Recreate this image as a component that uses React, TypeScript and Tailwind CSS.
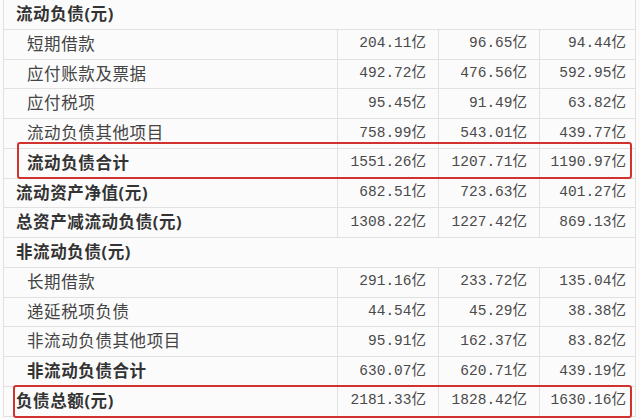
type Row = {
  label: string;
  kind: "section" | "item" | "total" | "summary";
  values?: string[];
};

const rows: Row[] = [
  { label: "流动负债(元)", kind: "section" },
  { label: "短期借款", kind: "item", values: ["204.11亿", "96.65亿", "94.44亿"] },
  { label: "应付账款及票据", kind: "item", values: ["492.72亿", "476.56亿", "592.95亿"] },
  { label: "应付税项", kind: "item", values: ["95.45亿", "91.49亿", "63.82亿"] },
  { label: "流动负债其他项目", kind: "item", values: ["758.99亿", "543.01亿", "439.77亿"] },
  { label: "流动负债合计", kind: "total", values: ["1551.26亿", "1207.71亿", "1190.97亿"] },
  { label: "流动资产净值(元)", kind: "summary", values: ["682.51亿", "723.63亿", "401.27亿"] },
  { label: "总资产减流动负债(元)", kind: "summary", values: ["1308.22亿", "1227.42亿", "869.13亿"] },
  { label: "非流动负债(元)", kind: "section" },
  { label: "长期借款", kind: "item", values: ["291.16亿", "233.72亿", "135.04亿"] },
  { label: "递延税项负债", kind: "item", values: ["44.54亿", "45.29亿", "38.38亿"] },
  { label: "非流动负债其他项目", kind: "item", values: ["95.91亿", "162.37亿", "83.82亿"] },
  { label: "非流动负债合计", kind: "total", values: ["630.07亿", "620.71亿", "439.19亿"] },
  { label: "负债总额(元)", kind: "summary", values: ["2181.33亿", "1828.42亿", "1630.16亿"] },
];

const cjk = "font-['Noto_Sans','Noto_Sans_CJK_SC',sans-serif]";
const mono = "font-['Liberation_Mono','Noto_Sans_CJK_SC',monospace]";

export default function App() {
  return (
    <div className="relative h-[419px] w-[640px] overflow-hidden bg-[#fbfbfb]">
      <div className="ml-[3px] w-[633px] border-x border-[#e1e1e1]">
        {rows.map((row) => {
          const bold = row.kind !== "item";
          const indent = row.kind === "item" || row.kind === "total" ? "pl-[23px]" : "pl-[12px]";
          return (
            <div
              key={row.label}
              className="flex h-[29.75px] items-center border-b border-[#e1e1e1]"
            >
              <div
                className={`flex h-full w-[333px] shrink-0 items-center ${indent} ${cjk} text-[16.5px] tracking-[0.6px] ${
                  bold ? "font-bold text-[#333]" : "text-[#444]"
                }`}
              >
                {row.label}
              </div>
              {row.values?.map((v, i) => (
                <div
                  key={i}
                  className={`flex h-full ${
                    i === 2 ? "w-[99px]" : "w-[101px]"
                  } shrink-0 items-center justify-end border-l border-[#e1e1e1] pr-[12px] ${mono} text-[14.5px] text-[#4a4a4a]`}
                >
                  {v}
                </div>
              ))}
            </div>
          );
        })}
      </div>

      {/* red highlight boxes */}
      <div className="absolute left-[17px] top-[142px] h-[37px] w-[615px] rounded-[3px] border-[2.5px] border-[#d2322d]" />
      <div className="absolute left-[13px] top-[385px] h-[33px] w-[619px] rounded-[3px] border-[2.5px] border-[#d2322d]" />
    </div>
  );
}
